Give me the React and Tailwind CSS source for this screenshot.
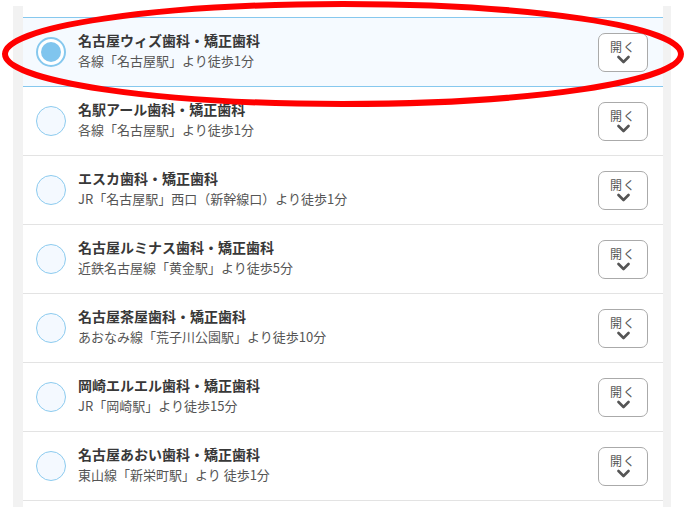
import React from "react";

const rows = [
  { name: "名古屋ウィズ歯科・矯正歯科", sub: "各線「名古屋駅」より徒歩1分", selected: true },
  { name: "名駅アール歯科・矯正歯科", sub: "各線「名古屋駅」より徒歩1分" },
  { name: "エスカ歯科・矯正歯科", sub: "JR「名古屋駅」西口（新幹線口）より徒歩1分" },
  { name: "名古屋ルミナス歯科・矯正歯科", sub: "近鉄名古屋線「黄金駅」より徒歩5分" },
  { name: "名古屋茶屋歯科・矯正歯科", sub: "あおなみ線「荒子川公園駅」より徒歩10分" },
  { name: "岡崎エルエル歯科・矯正歯科", sub: "JR「岡崎駅」より徒歩15分" },
  { name: "名古屋あおい歯科・矯正歯科", sub: "東山線「新栄町駅」より 徒歩1分" },
];

const font = { fontFamily: '"Noto Sans CJK JP", "Noto Sans", sans-serif' };

function Row({ r }) {
  return (
    <div
      className={
        "flex items-center pl-[13px] pr-[15px] " +
        (r.selected
          ? "h-[70px] border-y border-[#86c8ee] bg-[#f5faff]"
          : "h-[69px] border-b border-[#e3e3e3] bg-white")
      }
    >
      {r.selected ? (
        <div className="w-[30px] h-[30px] rounded-full border-2 border-[#86c8ee] bg-white flex items-center justify-center shrink-0">
          <div className="w-[20px] h-[20px] rounded-full bg-[#80c5ee]" />
        </div>
      ) : (
        <div className="w-[30px] h-[30px] rounded-full border border-[#8ccbef] bg-[#f4f9ff] shrink-0" />
      )}
      <div className="ml-[12px] flex-1 flex flex-col -mt-[3px]">
        <div className="text-[14px] leading-[20px] font-bold text-[#383838]">{r.name}</div>
        <div className="text-[13px] leading-[20px] text-[#555] mt-[1px]">{r.sub}</div>
      </div>
      <div className="w-[50px] h-[39px] rounded-[7px] border border-[#aaaaaa] bg-white flex flex-col items-center justify-center shrink-0">
        <div className="text-[12px] leading-[14px] text-[#555] tracking-[1px]">開く</div>
        <svg width="13" height="9" viewBox="0 0 13 9" className="mt-[1px]">
          <polyline points="1.5,2 6.5,7 11.5,2" fill="none" stroke="#555" strokeWidth="2.6" strokeLinecap="round" strokeLinejoin="round" />
        </svg>
      </div>
    </div>
  );
}

export default function App() {
  return (
    <div className="relative w-[686px] h-[507px] bg-white overflow-hidden" style={font}>
      <div className="pt-[6px] pl-[13px]">
        <div className="w-[658px] h-[501px] bg-[#f2f2f2] pl-[10px] pr-[8px]">
          <div className="h-full bg-white pt-[11px]">
            {rows.map((r, i) => (
              <Row key={i} r={r} />
            ))}
          </div>
        </div>
      </div>
      <svg className="absolute left-0 top-0 pointer-events-none" width="686" height="507" viewBox="0 0 686 507">
        <ellipse cx="343" cy="54" rx="338" ry="50" fill="none" stroke="#ff0000" strokeWidth="6" />
      </svg>
    </div>
  );
}
